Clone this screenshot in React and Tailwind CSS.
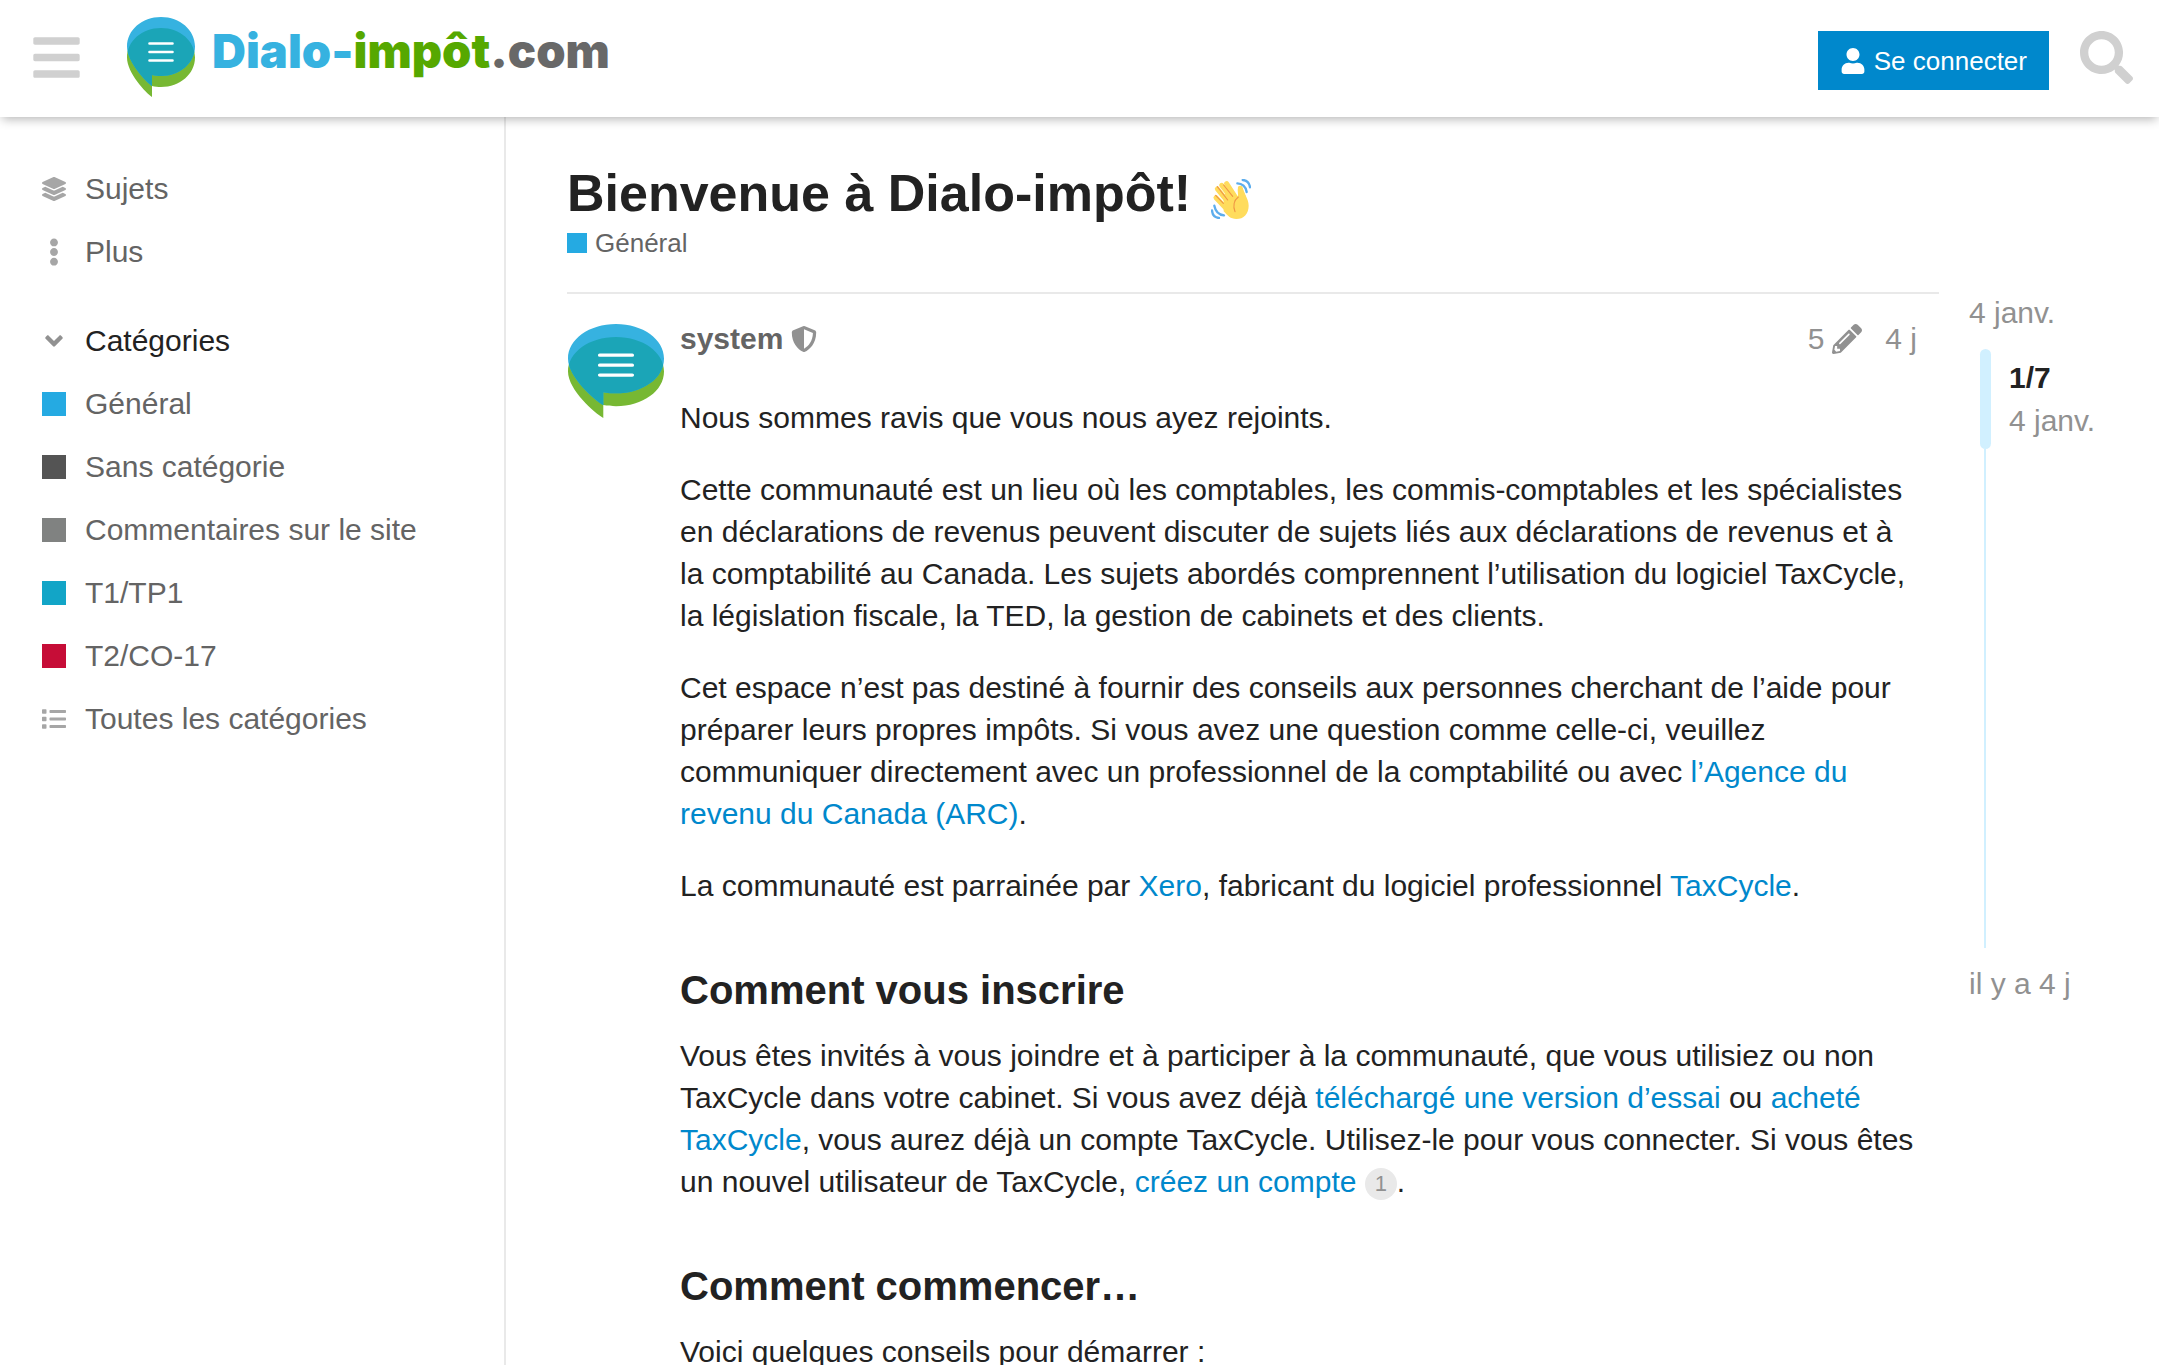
import { useState } from 'react';
import {
  FaAngleDown,
  FaBars,
  FaEllipsisV,
  FaLayerGroup,
  FaList,
  FaPencilAlt,
  FaSearch,
  FaShieldAlt,
  FaUser,
} from 'react-icons/fa';

const categories = [
  { name: 'Général', color: 'bg-[#25aae2]' },
  { name: 'Sans catégorie', color: 'bg-[#545454]' },
  { name: 'Commentaires sur le site', color: 'bg-[#808281]' },
  { name: 'T1/TP1', color: 'bg-[#12a5c7]' },
  { name: 'T2/CO-17', color: 'bg-[#c60d37]' },
];

const BUBBLE = 'M34 0C53 0 68 13 68 29.5S53 59 34 59C31 59 28 58.800 25 58V69C19 65 0 45 0 29.500C0 13 15 0 34 0Z';

function BubbleLogo({ className, clipId }) {
  return (
    <svg viewBox="0 0 68 80" preserveAspectRatio="none" className={className} aria-hidden="true">
      <defs>
        <clipPath id={clipId}>
          <path d={BUBBLE} />
        </clipPath>
      </defs>
      <path d={BUBBLE} fill="#77b833" transform="translate(0 11)" />
      <path d={BUBBLE} fill="#36b2e0" />
      <g clipPath={`url(#${clipId})`}>
        <path d={BUBBLE} fill="#1ba5b7" transform="translate(0 11)" />
      </g>
      <path d="M22.500 26.500h23M22.500 35h23M22.500 43.500h23" stroke="#fff" strokeWidth="2.600" strokeLinecap="round" />
    </svg>
  );
}

function WaveEmoji({ className }) {
  return (
    <svg viewBox="66 57 120 120" className={className} role="img" aria-label="wave" fill="none" strokeLinecap="round">
      <g stroke="#ffdc5d" strokeWidth="15">
        <path d="M81 113l32 34" />
        <path d="M85 87l36 44" />
        <path d="M98 76l34 44" />
        <path d="M113 71l30 46" />
        <path d="M154 85c1 10 6 14 9 26" />
      </g>
      <path
        fill="#ffdc5d"
        d="M104 104l26-12 12 16c3 3 6 1 5-4l-1-16 15-4c2 14 18 32 18 53 0 24-15 40-37 40-18 0-26-10-38-23z"
      />
      <g stroke="#ef9645" strokeWidth="3.500">
        <path d="M80 106l23 24" />
        <path d="M85 80l31 40" />
        <path d="M104 75l27 34" />
        <path d="M148 111c-14 10-16 28-10 44" />
      </g>
      <g stroke="#5dadec" strokeWidth="7">
        <path d="M145 70c14 0 26 10 28 26" />
        <path d="M161 60c12 0 21 10 22 22" />
        <path d="M76 137c3 16 13 27 29 29" />
        <path d="M69 151c1 13 9 22 21 23" />
      </g>
    </svg>
  );
}

function SidebarRow({ icon, children }) {
  return (
    <li>
      <a href="#" className="flex h-[63px] items-center gap-[19px] text-[#646464]">
        <span className="flex w-6 justify-center text-[#a6a6a6]">{icon}</span>
        {children}
      </a>
    </li>
  );
}

function Link({ children }) {
  return (
    <a href="#" className="text-[#0088cc]">
      {children}
    </a>
  );
}

export default function App() {
  const [categoriesOpen, setCategoriesOpen] = useState(true);

  return (
    <div className="flex h-screen flex-col overflow-hidden bg-white font-['Liberation_Sans',Arial,sans-serif] text-[30px] leading-[42px] text-[#222222]">
      <header className="z-10 flex h-[117px] shrink-0 items-start justify-between pl-[30px] pr-[26px] shadow-[0_4px_10px_-2px_rgba(0,0,0,0.3)]">
        <div className="flex items-center pt-[17px]">
          <button type="button" aria-label="Menu" className="text-[53px] text-[#d0d0d0]">
            <FaBars />
          </button>
          <a href="#" className="ml-11 flex items-center gap-[17px]">
            <BubbleLogo clipId="logo-bubble" className="h-20 w-[68px]" />
            <span className="pb-3 font-[Inter,sans-serif] text-[47px] font-black text-[#686868]">
              <span className="text-[#36b2e0]">Dialo-</span>
              <span className="text-[#56a800]">impôt</span>.com
            </span>
          </a>
        </div>
        <div className="flex items-start gap-[31px] pt-[31px]">
          <button type="button" className="flex h-[59px] items-center gap-2 bg-[#0088cc] px-[22px] text-[26px] text-white">
            <FaUser />
            Se connecter
          </button>
          <button type="button" aria-label="Rechercher" className="text-[53px] text-[#d0d0d0]">
            <FaSearch />
          </button>
        </div>
      </header>

      <div className="flex min-h-0 flex-1">
        <nav className="w-[506px] shrink-0 border-r-2 border-[#e9e9e9] pl-[42px] pt-10">
          <ul>
            <SidebarRow icon={<FaLayerGroup className="text-[24px]" />}>Sujets</SidebarRow>
            <SidebarRow icon={<FaEllipsisV className="text-[28px]" />}>Plus</SidebarRow>
          </ul>
          <button
            type="button"
            aria-expanded={categoriesOpen}
            onClick={() => setCategoriesOpen(!categoriesOpen)}
            className="mt-[26px] flex h-[63px] items-center gap-[19px]"
          >
            <span className="flex w-6 justify-center text-[28px] text-[#919191]">
              <FaAngleDown />
            </span>
            Catégories
          </button>
          {categoriesOpen && (
            <ul>
              {categories.map((category) => (
                <SidebarRow key={category.name} icon={<span className={`size-6 ${category.color}`} />}>
                  {category.name}
                </SidebarRow>
              ))}
              <SidebarRow icon={<FaList className="text-[24px]" />}>Toutes les catégories</SidebarRow>
            </ul>
          )}
        </nav>

        <main className="min-w-0 flex-1 pl-[61px] pt-[45px]">
          <h1 className="flex items-center gap-5 text-[52px] font-bold leading-[63px]">
            Bienvenue à Dialo-impôt!
            <WaveEmoji className="mt-[10px] size-10" />
          </h1>
          <a href="#" className="flex items-center gap-2 text-[26px] leading-9 text-[#646464]">
            <span className="size-5 bg-[#25aae2]" />
            Général
          </a>

          <div className="mt-[31px] flex">
            <article className="flex min-w-0 flex-1 items-start gap-4 border-t-2 border-[#e9e9e9] pl-px pr-[22px] pt-[30px]">
              <BubbleLogo clipId="avatar-bubble" className="h-[94px] w-24 shrink-0" />
              <div className="min-w-0 flex-1">
                <div className="flex items-center justify-between leading-[30px]">
                  <a href="#" className="flex items-center gap-2 font-bold text-[#646464]">
                    system
                    <FaShieldAlt className="text-[26px] text-[#919191]" />
                  </a>
                  <div className="flex items-center gap-[23px] text-[#919191]">
                    <button type="button" className="flex items-center gap-2">
                      5
                      <FaPencilAlt />
                    </button>
                    <a href="#">4 j</a>
                  </div>
                </div>

                <div className="mt-[43px]">
                  <p>Nous sommes ravis que vous nous ayez rejoints.</p>
                  <p className="mt-[30px]">
                    Cette communauté est un lieu où les comptables, les commis-comptables et les spécialistes en
                    déclarations de revenus peuvent discuter de sujets liés aux déclarations de revenus et à la
                    comptabilité au Canada. Les sujets abordés comprennent l’utilisation du logiciel TaxCycle, la
                    législation fiscale, la TED, la gestion de cabinets et des clients.
                  </p>
                  <p className="mt-[30px]">
                    Cet espace n’est pas destiné à fournir des conseils aux personnes cherchant de l’aide pour
                    préparer leurs propres impôts. Si vous avez une question comme celle-ci, veuillez communiquer
                    directement avec un professionnel de la comptabilité ou avec{' '}
                    <Link>l’Agence du revenu du Canada (ARC)</Link>.
                  </p>
                  <p className="mt-[30px]">
                    La communauté est parrainée par <Link>Xero</Link>, fabricant du logiciel professionnel{' '}
                    <Link>TaxCycle</Link>.
                  </p>

                  <h2 className="mt-[59px] text-[40px] font-bold leading-[48px]">Comment vous inscrire</h2>
                  <p className="mt-[21px]">
                    Vous êtes invités à vous joindre et à participer à la communauté, que vous utilisiez ou non
                    TaxCycle dans votre cabinet. Si vous avez déjà <Link>téléchargé une version d’essai</Link> ou{' '}
                    <Link>acheté TaxCycle</Link>, vous aurez déjà un compte TaxCycle. Utilisez-le pour vous
                    connecter. Si vous êtes un nouvel utilisateur de TaxCycle, <Link>créez un compte</Link>{' '}
                    <span className="inline-block size-8 rounded-full bg-[#e9e9e9] text-center align-middle text-[22px] leading-8 text-[#919191]">
                      1
                    </span>
                    .
                  </p>

                  <h2 className="mt-[59px] text-[40px] font-bold leading-[48px]">Comment commencer…</h2>
                  <p className="mt-[21px]">Voici quelques conseils pour démarrer :</p>
                </div>
              </div>
            </article>

            {/* Topic timeline */}
            <aside className="w-[220px] shrink-0 pl-[30px] text-[#919191]">
              <a href="#" className="block">4 janv.</a>
              <div className="my-[15px] ml-[11px] flex h-[599px] flex-col">
                <div className="flex h-[100px] items-center gap-[18px]">
                  <div className="h-full w-[11px] rounded-full bg-[#d1f0ff]" />
                  <div className="leading-[43px]">
                    <div className="font-bold text-[#222222]">1/7</div>
                    <div>4 janv.</div>
                  </div>
                </div>
                <div className="ml-1 flex-1 border-l-2 border-[#d1f0ff]" />
              </div>
              <a href="#" className="block">il y a 4 j</a>
            </aside>
          </div>
        </main>
      </div>
    </div>
  );
}
